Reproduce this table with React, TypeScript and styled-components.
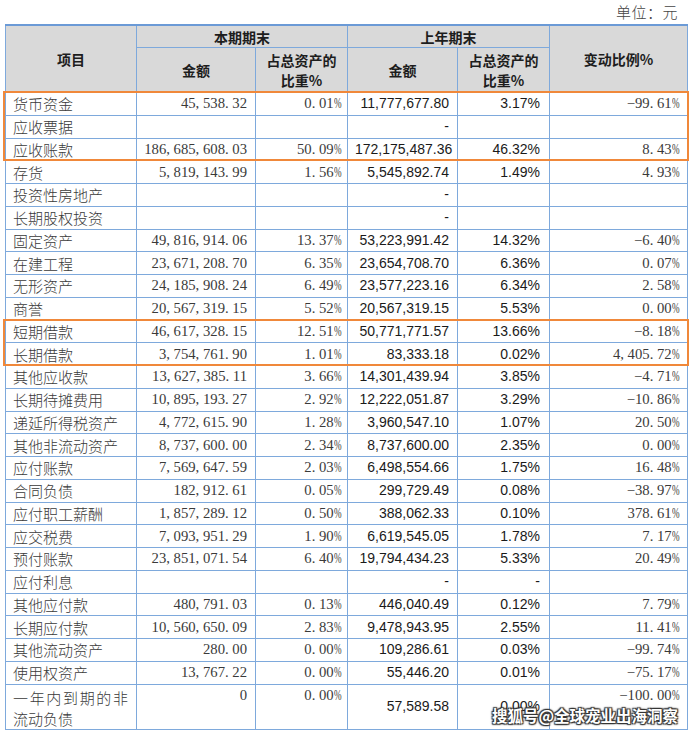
import React from "react";
import styled, { createGlobalStyle } from "styled-components";

const Global = createGlobalStyle`
  html, body { margin: 0; padding: 0; background: #fff; }
  body { font-family: "Noto Sans CJK SC", "Noto Sans", sans-serif; }
`;

const ROW_H = 22.75;
const HEAD_H = 68;

type Row = [string, string, string, string, string, string];

const rows: Row[] = [
  ["货币资金", "45,538.32", "0.01%", "11,777,677.80", "3.17%", "−99.61%"],
  ["应收票据", "", "", "-", "", ""],
  ["应收账款", "186,685,608.03", "50.09%", "172,175,487.36", "46.32%", "8.43%"],
  ["存货", "5,819,143.99", "1.56%", "5,545,892.74", "1.49%", "4.93%"],
  ["投资性房地产", "", "", "-", "", ""],
  ["长期股权投资", "", "", "-", "", ""],
  ["固定资产", "49,816,914.06", "13.37%", "53,223,991.42", "14.32%", "−6.40%"],
  ["在建工程", "23,671,208.70", "6.35%", "23,654,708.70", "6.36%", "0.07%"],
  ["无形资产", "24,185,908.24", "6.49%", "23,577,223.16", "6.34%", "2.58%"],
  ["商誉", "20,567,319.15", "5.52%", "20,567,319.15", "5.53%", "0.00%"],
  ["短期借款", "46,617,328.15", "12.51%", "50,771,771.57", "13.66%", "−8.18%"],
  ["长期借款", "3,754,761.90", "1.01%", "83,333.18", "0.02%", "4,405.72%"],
  ["其他应收款", "13,627,385.11", "3.66%", "14,301,439.94", "3.85%", "−4.71%"],
  ["长期待摊费用", "10,895,193.27", "2.92%", "12,222,051.87", "3.29%", "−10.86%"],
  ["递延所得税资产", "4,772,615.90", "1.28%", "3,960,547.10", "1.07%", "20.50%"],
  ["其他非流动资产", "8,737,600.00", "2.34%", "8,737,600.00", "2.35%", "0.00%"],
  ["应付账款", "7,569,647.59", "2.03%", "6,498,554.66", "1.75%", "16.48%"],
  ["合同负债", "182,912.61", "0.05%", "299,729.49", "0.08%", "−38.97%"],
  ["应付职工薪酬", "1,857,289.12", "0.50%", "388,062.33", "0.10%", "378.61%"],
  ["应交税费", "7,093,951.29", "1.90%", "6,619,545.05", "1.78%", "7.17%"],
  ["预付账款", "23,851,071.54", "6.40%", "19,794,434.23", "5.33%", "20.49%"],
  ["应付利息", "", "", "-", "-", ""],
  ["其他应付款", "480,791.03", "0.13%", "446,040.49", "0.12%", "7.79%"],
  ["长期应付款", "10,560,650.09", "2.83%", "9,478,943.95", "2.55%", "11.41%"],
  ["其他流动资产", "280.00", "0.00%", "109,286.61", "0.03%", "−99.74%"],
  ["使用权资产", "13,767.22", "0.00%", "55,446.20", "0.01%", "−75.17%"],
];

const lastRow: Row = ["一年内到期的非流动负债", "0", "0.00%", "57,589.58", "0.00%", "−100.00%"];

const highlights: [number, number][] = [
  [0, 3],
  [10, 2],
];

const Page = styled.div`
  width: 692px;
  padding: 0 5px;
  box-sizing: border-box;
`;

const Unit = styled.div`
  height: 24px;
  line-height: 24px;
  text-align: right;
  padding-right: 9px;
  font-size: 15px;
  color: #444;
  font-weight: 300;
  letter-spacing: 0.5px;
`;

const TableWrap = styled.div`
  position: relative;
  width: 682px;
`;

const Table = styled.table`
  width: 682px;
  table-layout: fixed;
  border-collapse: collapse;
  border: 1px solid #7ea9dc;
  border-top: 2px solid #6b9ad6;
`;

const Th = styled.th<{ $h?: number }>`
  background: #d9d9d9;
  border: 1px solid #7ea9dc;
  font-family: "Noto Sans CJK SC", sans-serif;
  font-weight: 700;
  font-size: 14px;
  color: #1d1d1d;
  line-height: 20px;
  text-align: center;
  vertical-align: middle;
  padding: 0;
  height: ${(p) => p.$h ?? 22}px;
`;

const Tr = styled.tr<{ $h: number }>`
  height: ${(p) => p.$h}px;
`;

type Kind = "label" | "serif" | "sans";

const Td = styled.td<{ $kind: Kind; $top?: boolean; $pr?: number }>`
  border: 1px solid #7ea9dc;
  padding: ${(p) => (p.$top ? "2px" : "0")} ${(p) => p.$pr ?? 8}px 0 7px;
  vertical-align: ${(p) => (p.$top ? "top" : "middle")};
  white-space: ${(p) => (p.$kind === "label" ? "normal" : "nowrap")};
  text-align: ${(p) => (p.$kind === "label" ? "justify" : "right")};
  line-height: ${(p) => (p.$kind === "label" && p.$top ? "21px" : "17px")};
  font-family: ${(p) =>
    p.$kind === "label"
      ? `"Noto Sans CJK SC", sans-serif`
      : p.$kind === "serif"
      ? `"Liberation Serif", "DejaVu Serif", serif`
      : `"Liberation Sans", Arial, sans-serif`};
  font-size: ${(p) => (p.$kind === "label" ? "15px" : p.$kind === "serif" ? "14.7px" : "14px")};
  font-weight: ${(p) => (p.$kind === "label" ? 300 : 400)};
  color: ${(p) => (p.$kind === "sans" ? "#1a1a1a" : "#3a3a3a")};
  overflow: hidden;
`;

const Punct = styled.span`
  display: inline-block;
  width: 0.5em;
  text-align: left;
`;

const Pct = styled.span`
  display: inline-block;
  width: 0.5em;
  white-space: nowrap;
  transform: scaleX(0.62);
  transform-origin: left center;
`;

const Box = styled.div`
  position: absolute;
  left: -2px;
  width: 686px;
  border: 2.5px solid #f0883a;
  box-sizing: border-box;
  pointer-events: none;
`;

const Watermark = styled.div`
  position: absolute;
  right: 9px;
  bottom: 6px;
  font-family: "Noto Sans CJK SC", sans-serif;
  font-weight: 700;
  font-size: 15.5px;
  line-height: 18px;
  color: #fff;
  white-space: nowrap;
  text-shadow: 1px 1px 1px #333, -1px -1px 1px #333, 1px -1px 1px #333,
    -1px 1px 1px #333, 0 0 3px rgba(0, 0, 0, 0.6);
`;

const SerifNum: React.FC<{ v: string }> = ({ v }) => {
  const parts = v.split(/([,.%])/).filter(Boolean);
  return (
    <>
      {parts.map((p, i) =>
        p === "," || p === "." ? (
          <Punct key={i}>{p}</Punct>
        ) : p === "%" ? (
          <Pct key={i}>%</Pct>
        ) : (
          <React.Fragment key={i}>{p}</React.Fragment>
        )
      )}
    </>
  );
};

const DataRow: React.FC<{ r: Row; h: number; last?: boolean }> = ({ r, h, last }) => (
  <Tr $h={h}>
    <Td $kind="label" $top={last}>
      {r[0]}
    </Td>
    <Td $kind="serif" $top={last} $pr={8}>
      <SerifNum v={r[1]} />
    </Td>
    <Td $kind="serif" $top={last} $pr={6}>
      <SerifNum v={r[2]} />
    </Td>
    <Td $kind="sans" $pr={8}>
      {r[3]}
    </Td>
    <Td $kind="sans" $pr={9}>
      {r[4]}
    </Td>
    <Td $kind="serif" $top={last} $pr={8}>
      <SerifNum v={r[5]} />
    </Td>
  </Tr>
);

export default function App() {
  return (
    <Page>
      <Global />
      <Unit>单位：元</Unit>
      <TableWrap>
        <Table>
          <colgroup>
            <col style={{ width: 131 }} />
            <col style={{ width: 119 }} />
            <col style={{ width: 92 }} />
            <col style={{ width: 110 }} />
            <col style={{ width: 92 }} />
            <col style={{ width: 138 }} />
          </colgroup>
          <thead>
            <tr>
              <Th rowSpan={2}>项目</Th>
              <Th colSpan={2} $h={21}>
                本期期末
              </Th>
              <Th colSpan={2} $h={21}>
                上年期末
              </Th>
              <Th rowSpan={2}>变动比例%</Th>
            </tr>
            <tr>
              <Th $h={44}>金额</Th>
              <Th $h={44}>
                占总资产的
                <br />
                比重%
              </Th>
              <Th $h={44}>金额</Th>
              <Th $h={44}>
                占总资产的
                <br />
                比重%
              </Th>
            </tr>
          </thead>
          <tbody>
            {rows.map((r, i) => (
              <DataRow key={i} r={r} h={ROW_H} />
            ))}
            <DataRow r={lastRow} h={44} last />
          </tbody>
        </Table>
        {highlights.map(([start, count], i) => (
          <Box
            key={i}
            style={{ top: HEAD_H + start * ROW_H - 1, height: count * ROW_H + 2 }}
          />
        ))}
        <Watermark>搜狐号@全球宠业出海洞察</Watermark>
      </TableWrap>
    </Page>
  );
}
